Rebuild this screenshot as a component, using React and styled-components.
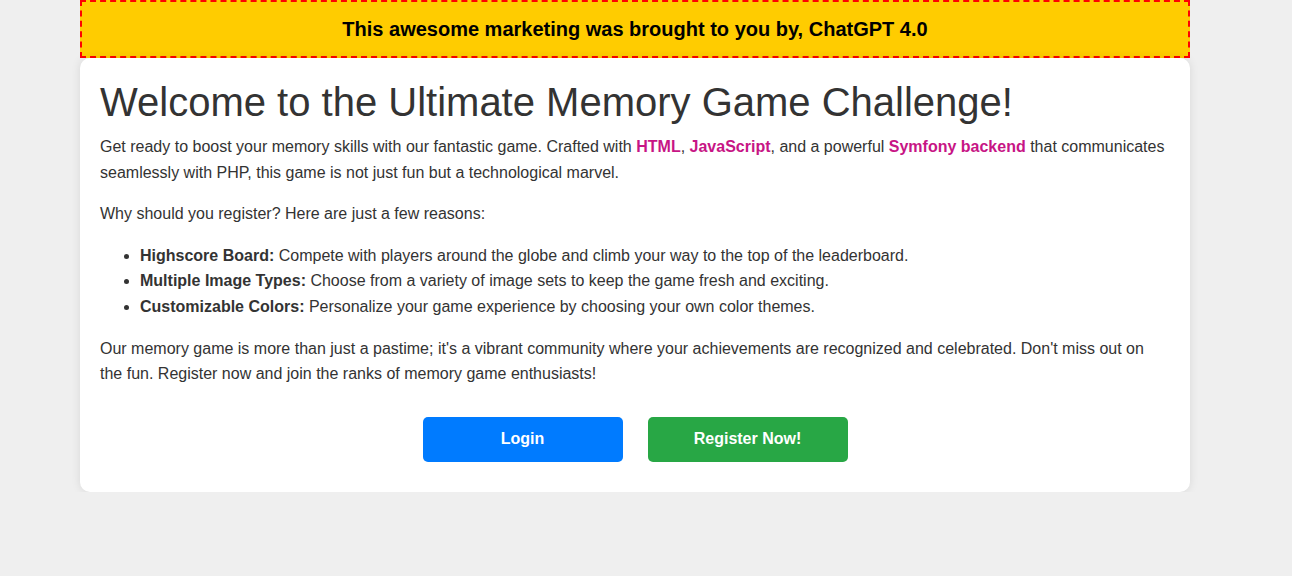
import React from "react";
import styled, { createGlobalStyle } from "styled-components";

const Global = createGlobalStyle`
  html, body { margin: 0; padding: 0; background: #efefef; }
  body { font-family: "Liberation Sans", Arial, sans-serif; color: #333; }
`;

const Page = styled.div`
  width: 1110px;
  margin: 0 0 0 80px;
`;

const Banner = styled.div`
  box-sizing: border-box;
  height: 58px;
  background: #ffcc00;
  border: 2px dashed #ff0000;
  display: flex;
  align-items: center;
  justify-content: center;
  font-size: 20px;
  font-weight: bold;
  color: #000;
`;

const Card = styled.main`
  background: #fff;
  border-radius: 10px;
  box-shadow: 0 0 10px rgba(0, 0, 0, 0.1);
  padding: 21px 20px 30px;
`;

const Title = styled.h1`
  margin: 0 0 9px;
  font-size: 40px;
  font-weight: normal;
  line-height: 46px;
  color: #333;
`;

const Para = styled.p`
  margin: 0 0 16px;
  font-size: 16px;
  line-height: 1.6;
`;

const Hl = styled.strong`
  color: #c71585;
`;

const List = styled.ul`
  margin: 0 0 16px;
  padding-left: 40px;
  font-size: 16px;
  line-height: 1.6;
`;

const Actions = styled.div`
  display: flex;
  justify-content: center;
  gap: 25px;
  margin-top: 30px;
`;

const Button = styled.a`
  width: 200px;
  height: 45px;
  display: flex;
  align-items: center;
  justify-content: center;
  border-radius: 5px;
  background: ${(p) => p.$bg};
  color: #fff;
  font-weight: bold;
  font-size: 16px;
  text-decoration: none;
`;

export default function App() {
  return (
    <>
      <Global />
      <Page>
        <Banner>This awesome marketing was brought to you by, ChatGPT 4.0</Banner>
        <Card>
          <Title>Welcome to the Ultimate Memory Game Challenge!</Title>
          <Para>
            Get ready to boost your memory skills with our fantastic game. Crafted with{" "}
            <Hl>HTML</Hl>, <Hl>JavaScript</Hl>, and a powerful <Hl>Symfony backend</Hl> that
            communicates seamlessly with PHP, this game is not just fun but a technological marvel.
          </Para>
          <Para>Why should you register? Here are just a few reasons:</Para>
          <List>
            <li>
              <strong>Highscore Board:</strong> Compete with players around the globe and climb your
              way to the top of the leaderboard.
            </li>
            <li>
              <strong>Multiple Image Types:</strong> Choose from a variety of image sets to keep the
              game fresh and exciting.
            </li>
            <li>
              <strong>Customizable Colors:</strong> Personalize your game experience by choosing your
              own color themes.
            </li>
          </List>
          <Para>
            Our memory game is more than just a pastime; it's a vibrant community where your
            achievements are recognized and celebrated. Don't miss out on the fun. Register now and
            join the ranks of memory game enthusiasts!
          </Para>
          <Actions>
            <Button href="#" $bg="#007bff">Login</Button>
            <Button href="#" $bg="#28a745">Register Now!</Button>
          </Actions>
        </Card>
      </Page>
    </>
  );
}
